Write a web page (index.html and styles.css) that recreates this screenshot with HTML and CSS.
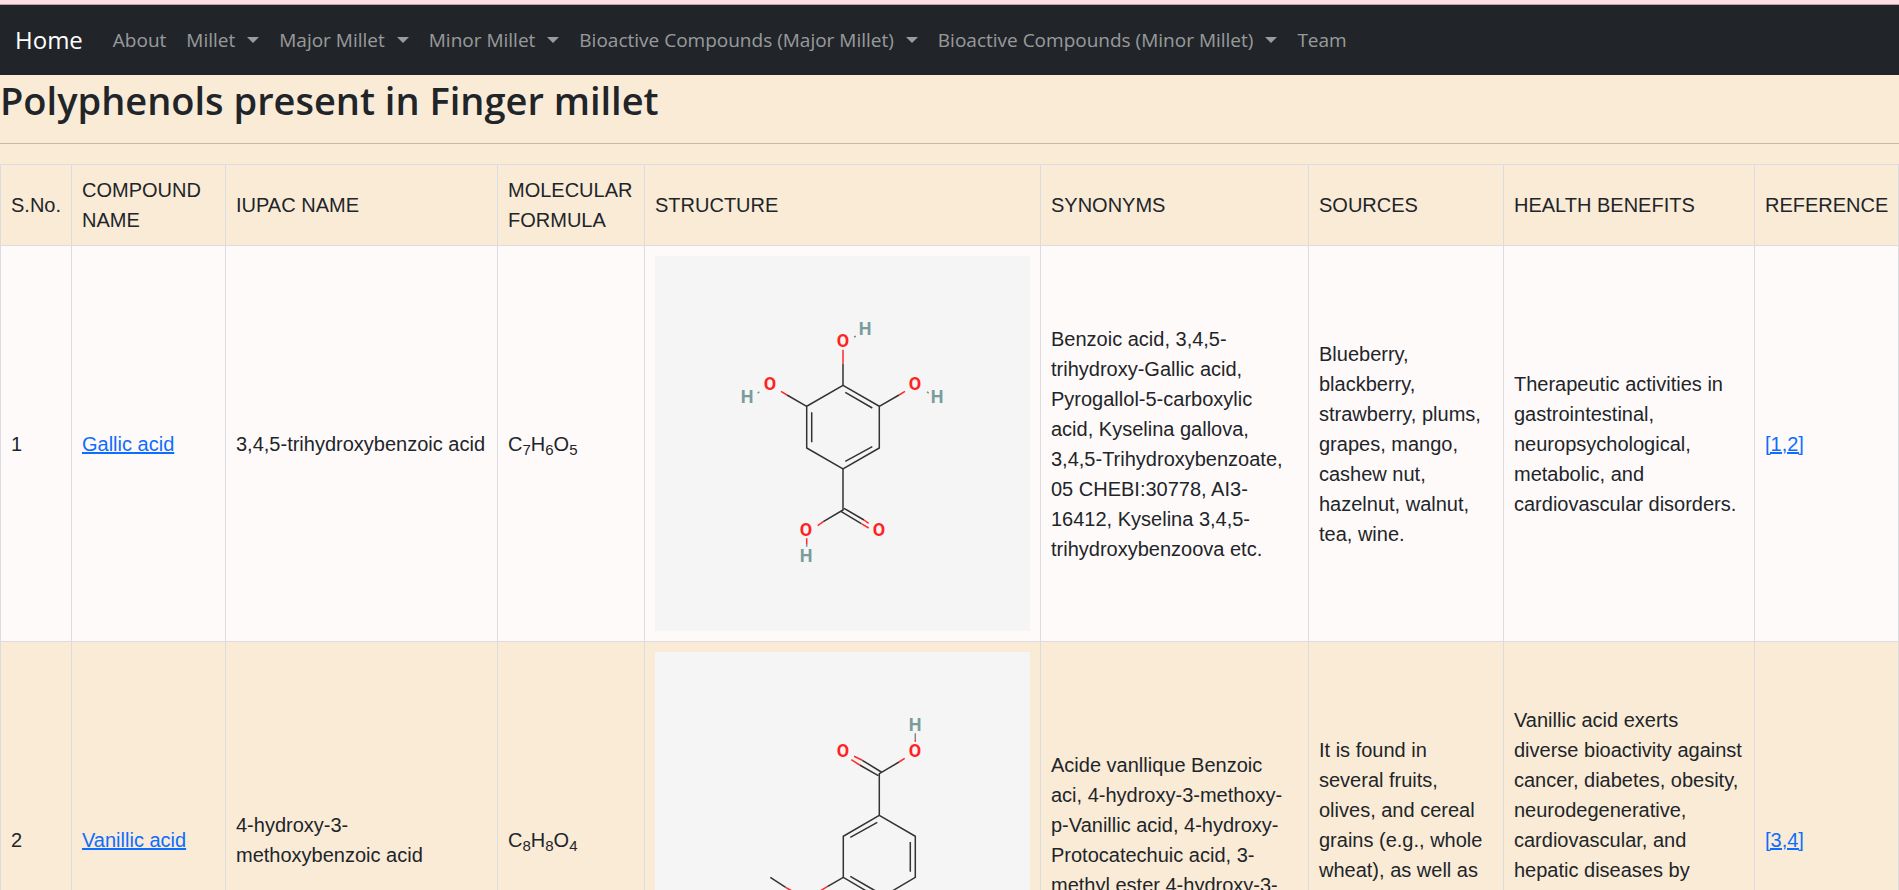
FILE: index.html
```html
<!DOCTYPE html>
<html lang="en">
<head>
<meta charset="utf-8">
<meta name="viewport" content="width=device-width, initial-scale=1">
<title>Polyphenols present in Finger millet</title>
<link rel="stylesheet" href="styles.css">
</head>
<body>
<nav class="navbar" aria-label="Main">
  <a class="navbar-brand" href="#">Home</a>
  <ul class="navbar-nav">
    <li><a class="nav-link" href="#">About</a></li>
    <li><a class="nav-link dropdown" href="#">Millet</a></li>
    <li><a class="nav-link dropdown" href="#">Major Millet</a></li>
    <li><a class="nav-link dropdown" href="#">Minor Millet</a></li>
    <li><a class="nav-link dropdown" href="#">Bioactive Compounds (Major Millet)</a></li>
    <li><a class="nav-link dropdown" href="#">Bioactive Compounds (Minor Millet)</a></li>
    <li><a class="nav-link" href="#">Team</a></li>
  </ul>
</nav>
<main>
  <h1 class="title">Polyphenols present in Finger millet</h1>
  <hr class="rule">
  <table class="compounds">
    <colgroup>
      <col class="col-number"><col class="col-name"><col class="col-iupac"><col class="col-formula"><col class="col-structure"><col class="col-synonyms"><col class="col-sources"><col class="col-benefits"><col class="col-reference">
    </colgroup>
    <thead>
      <tr>
        <th scope="col">S.No.</th>
        <th scope="col">COMPOUND NAME</th>
        <th scope="col">IUPAC NAME</th>
        <th scope="col">MOLECULAR FORMULA</th>
        <th scope="col">STRUCTURE</th>
        <th scope="col">SYNONYMS</th>
        <th scope="col">SOURCES</th>
        <th scope="col">HEALTH BENEFITS</th>
        <th scope="col">REFERENCE</th>
      </tr>
    </thead>
    <tbody>
      <tr>
        <td>1</td>
        <td><a href="#">Gallic acid</a></td>
        <td>3,4,5-trihydroxybenzoic acid</td>
        <td>C<sub>7</sub>H<sub>6</sub>O<sub>5</sub></td>
        <td>
          <svg class="structure" viewBox="0 0 375 375" role="img" aria-label="Structure of gallic acid">
            <g class="bond">
              <path d="M188 129.3 224.3 150.3V192L188 213 151.7 192V150.3Z"/>
              <path d="M190.3 136.3 217.3 152M217.3 190.7 190.3 205.3M156.7 156.3V186.3"/>
              <path d="M188 129.3V107.7M224.3 150.3 244 139M151.7 150.3 132 139M188 213V254L168.3 265.7M189 252.3 209 264M186.3 255.7 206.3 267.7"/>
            </g>
            <path class="bond oxygen" d="M188 107.7V93.7M244 139 250 135.3M132 139 126 135.3M168.3 265.7 162.7 269.7M209 264 213.7 267.3M206.3 267.7 213.7 272M151.7 282.3V288"/>
            <path class="bond hydrogen" d="M199 81 201 80.3M272 135.7 273.7 137.3M104.3 135.7 102.7 137.3M151.7 288V290.7"/>
            <g class="atom oxygen-label">
              <text x="188" y="91">O</text><text x="260" y="134">O</text><text x="115" y="134">O</text><text x="151" y="280">O</text><text x="224" y="280">O</text>
            </g>
            <g class="atom hydrogen-label">
              <text x="210" y="79">H</text><text x="282" y="147">H</text><text x="92" y="147">H</text><text x="151" y="306">H</text>
            </g>
          </svg>
        </td>
        <td>Benzoic acid, 3,4,5-trihydroxy-Gallic acid, Pyrogallol-5-carboxylic acid, Kyselina gallova, 3,4,5-Trihydroxybenzoate, 05 CHEBI:30778, AI3-16412, Kyselina 3,4,5-trihydroxybenzoova etc.</td>
        <td>Blueberry, blackberry, strawberry, plums, grapes, mango, cashew nut, hazelnut, walnut, tea, wine.</td>
        <td>Therapeutic activities in gastrointestinal, neuropsychological, metabolic, and cardiovascular disorders.</td>
        <td><a href="#">[1,2]</a></td>
      </tr>
      <tr>
        <td>2</td>
        <td><a href="#">Vanillic acid</a></td>
        <td>4-hydroxy-3-methoxybenzoic acid</td>
        <td>C<sub>8</sub>H<sub>8</sub>O<sub>4</sub></td>
        <td>
          <svg class="structure" viewBox="0 0 375 375" role="img" aria-label="Structure of vanillic acid">
            <g class="bond">
              <path d="M224.3 163.3 260.3 184.3V225.3L224.3 246.7 188.3 225.3V184.3Z"/>
              <path d="M222.3 170.3 195.3 185.3M255.3 190V219.7M195.3 224.3 222.3 240"/>
              <path d="M224.3 163.3V121.7L244 110M226.3 120 207.3 108.3M223.3 123.7 204.7 113M188.3 225.3 172.3 234.7M115.3 225.3 130.7 235.3M224.3 246.7V268"/>
            </g>
            <path class="bond oxygen" d="M244 110 249.7 106.3M207.3 108.3 199 104.3M204.7 113 196.3 107.7M260.3 87.3V89.7M172.3 234.7 166 238.3M130.7 235.3 137 239M224.3 268V280"/>
            <path class="bond hydrogen" d="M260.3 81.3V87.3M236 295 238 296"/>
            <g class="atom oxygen-label">
              <text x="188" y="105">O</text><text x="260" y="105">O</text><text x="152" y="253">O</text><text x="224" y="297">O</text>
            </g>
            <g class="atom hydrogen-label">
              <text x="260" y="79">H</text><text x="246" y="309">H</text>
            </g>
          </svg>
        </td>
        <td>Acide vanllique Benzoic aci, 4-hydroxy-3-methoxy-p-Vanillic acid, 4-hydroxy-Protocatechuic acid, 3-methyl ester 4-hydroxy-3-methoxybenzoate etc.</td>
        <td>It is found in several fruits, olives, and cereal grains (e.g., whole wheat), as well as wine, beer, and apple cider.</td>
        <td>Vanillic acid exerts diverse bioactivity against cancer, diabetes, obesity, neurodegenerative, cardiovascular, and hepatic diseases by inhibiting the associated molecular pathways in cells and tissues.</td>
        <td><a href="#">[3,4]</a></td>
      </tr>
    </tbody>
  </table>
</main>
</body>
</html>
```
FILE: styles.css
```css
*, *::before, *::after { box-sizing: border-box; }

body {
  margin: 0;
  border-top: 4px solid #ffdde3;
  background: #faebd7;
  color: #212529;
  font: 20px/30px "Liberation Sans", Arial, sans-serif;
}

.navbar {
  display: flex;
  align-items: center;
  min-height: 71px;
  padding: 10px 15px;
  border-top: 1px solid #b9a4a8;
  background: #212529;
  font-family: "Segoe UI", "Open Sans", sans-serif;
}

.navbar-brand {
  margin-right: 20px;
  color: #fff;
  font-size: 24px;
  text-decoration: none;
}

.navbar-nav {
  display: flex;
  margin: 0;
  padding: 0;
  list-style: none;
}

.nav-link {
  display: flex;
  align-items: center;
  gap: 12px;
  padding: 10px;
  color: rgba(255, 255, 255, .55);
  font-size: 19px;
  text-decoration: none;
  white-space: nowrap;
}

.dropdown::after {
  content: "";
  border-top: 6px solid;
  border-right: 6px solid transparent;
  border-left: 6px solid transparent;
}

.title {
  margin: 0;
  font: 600 38px/50px "Segoe UI", "Open Sans", sans-serif;
}

.rule {
  height: 1px;
  margin: 18px 0 20px;
  border: 0;
  background: #c4b9aa;
}

.compounds {
  width: 100%;
  border-collapse: collapse;
  table-layout: fixed;
}

.compounds th,
.compounds td {
  padding: 10px;
  border: 1px solid #dcdcde;
  font-weight: 400;
  text-align: left;
  vertical-align: middle;
}

.compounds tbody tr:nth-child(odd) { background: #fffafa; }
.compounds a { color: #0d6efd; }

.compounds sub {
  position: relative;
  bottom: -4px;
  font-size: 15px;
  line-height: 0;
  vertical-align: baseline;
}

.col-number { width: 71px; }
.col-name { width: 154px; }
.col-iupac { width: 272px; }
.col-formula { width: 147px; }
.col-structure { width: 396px; }
.col-synonyms { width: 268px; }
.col-sources { width: 195px; }
.col-benefits { width: 251px; }
.col-reference { width: 144px; }

.structure {
  display: block;
  width: 100%;
  background: #f5f5f5;
}

.bond { fill: none; stroke: #333; stroke-width: 1.5; }
.oxygen { stroke: #ff2a2a; }
.hydrogen { stroke: #6f9494; }
.atom { font: 700 18px Roboto, sans-serif; text-anchor: middle; }
.oxygen-label { fill: #ff2222; }
.hydrogen-label { fill: #7a9c9c; }
```
